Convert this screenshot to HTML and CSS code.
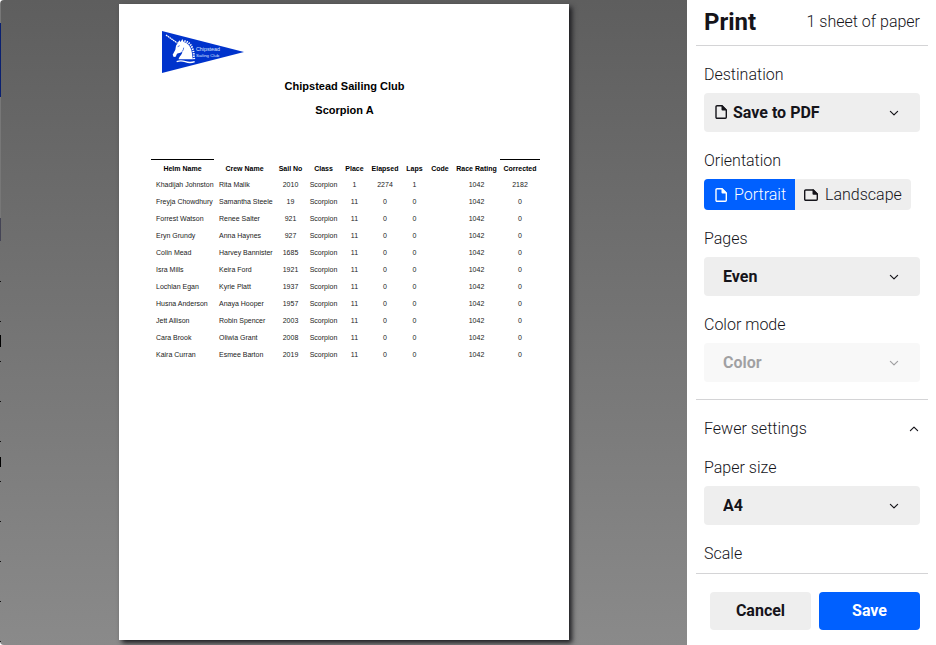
FILE: index.html
```html
<!DOCTYPE html>
<html lang="en">
<head>
<meta charset="utf-8">
<meta name="viewport" content="width=device-width, initial-scale=1">
<title>Print</title>
<link rel="stylesheet" href="styles.css">
</head>
<body>
<svg class="defs" aria-hidden="true">
  <symbol id="chevron" viewBox="0 0 12 12"><path d="M2.4 4.4l3.6 3.5 3.6-3.5" fill="none" stroke="currentColor" stroke-width="1.2" stroke-linecap="round" stroke-linejoin="round"/></symbol>
  <symbol id="portrait" viewBox="0 0 14 16"><path d="M3 1.7h5L12.3 6v7.3a1 1 0 0 1-1 1H3a1 1 0 0 1-1-1V2.7a1 1 0 0 1 1-1z" fill="none" stroke="currentColor" stroke-width="1.4"/><path d="M7.5 1.5h1L12.5 5.5v1h-4a1 1 0 0 1-1-1z" fill="currentColor"/></symbol>
  <symbol id="landscape" viewBox="0 0 16 14"><path d="M2.7 2h7.6l4 4v5.3a1 1 0 0 1-1 1H2.7a1 1 0 0 1-1-1V3a1 1 0 0 1 1-1z" fill="none" stroke="currentColor" stroke-width="1.4"/><path d="M9.5 1.5h1L14.8 5.8v1h-4.3a1 1 0 0 1-1-1z" fill="currentColor"/></symbol>
</svg>
<div class="dialog">
  <main class="preview">
    <article class="sheet">
      <svg class="logo" viewBox="0 0 246 126" role="img" aria-label="Chipstead Sailing Club pennant">
        <path d="M0 0L246 63L0 126z" fill="#0033cc"/>
        <path d="M12 12L46 36" stroke="#fff" stroke-width="4" stroke-dasharray="5 1.5"/>
        <path d="M47 36l5-8 4 5 5-9 4 9c12 3 20 12 23 24 3 12 2 20 5 28H50c1-9 10-13 11-23-6 4-11 3-16 6l-4 9-6 1-3-7 8-15 2-12z" fill="#fff"/>
        <path d="M67 30c14 3 22 13 26 27 3 10 2 20 4 29" fill="none" stroke="#fff" stroke-width="6" stroke-dasharray="4 3"/>
        <path d="M47 47l6-3M60 62q5-5 5-12" fill="none" stroke="#0033cc" stroke-width="2"/>
        <path d="M44 92q12-5 26 0t28 0" fill="none" stroke="#fff" stroke-width="4"/>
        <text class="logo-text" x="102" y="61">Chipstead</text>
        <text class="logo-text logo-subtext" x="102" y="78">Sailing Club</text>
      </svg>
      <h1>Chipstead Sailing Club</h1>
      <h2>Scorpion A</h2>
      <table>
        <colgroup><col class="c-helm"><col class="c-crew"><col class="c-sail"><col class="c-class"><col class="c-place"><col class="c-elapsed"><col class="c-laps"><col class="c-code"><col class="c-rating"><col class="c-corrected"></colgroup>
        <thead><tr><th>Helm Name</th><th>Crew Name</th><th>Sail No</th><th>Class</th><th>Place</th><th>Elapsed</th><th>Laps</th><th>Code</th><th>Race Rating</th><th>Corrected</th></tr></thead>
        <tbody>
          <tr><td>Khadijah Johnston</td><td>Rita Malik</td><td>2010</td><td>Scorpion</td><td>1</td><td>2274</td><td>1</td><td></td><td>1042</td><td>2182</td></tr>
          <tr><td>Freyja Chowdhury</td><td>Samantha Steele</td><td>19</td><td>Scorpion</td><td>11</td><td>0</td><td>0</td><td></td><td>1042</td><td>0</td></tr>
          <tr><td>Forrest Watson</td><td>Renee Salter</td><td>921</td><td>Scorpion</td><td>11</td><td>0</td><td>0</td><td></td><td>1042</td><td>0</td></tr>
          <tr><td>Eryn Grundy</td><td>Anna Haynes</td><td>927</td><td>Scorpion</td><td>11</td><td>0</td><td>0</td><td></td><td>1042</td><td>0</td></tr>
          <tr><td>Colin Mead</td><td>Harvey Bannister</td><td>1685</td><td>Scorpion</td><td>11</td><td>0</td><td>0</td><td></td><td>1042</td><td>0</td></tr>
          <tr><td>Isra Mills</td><td>Keira Ford</td><td>1921</td><td>Scorpion</td><td>11</td><td>0</td><td>0</td><td></td><td>1042</td><td>0</td></tr>
          <tr><td>Lochlan Egan</td><td>Kyrie Platt</td><td>1937</td><td>Scorpion</td><td>11</td><td>0</td><td>0</td><td></td><td>1042</td><td>0</td></tr>
          <tr><td>Husna Anderson</td><td>Anaya Hooper</td><td>1957</td><td>Scorpion</td><td>11</td><td>0</td><td>0</td><td></td><td>1042</td><td>0</td></tr>
          <tr><td>Jett Allison</td><td>Robin Spencer</td><td>2003</td><td>Scorpion</td><td>11</td><td>0</td><td>0</td><td></td><td>1042</td><td>0</td></tr>
          <tr><td>Cara Brook</td><td>Oliwia Grant</td><td>2008</td><td>Scorpion</td><td>11</td><td>0</td><td>0</td><td></td><td>1042</td><td>0</td></tr>
          <tr><td>Kaira Curran</td><td>Esmee Barton</td><td>2019</td><td>Scorpion</td><td>11</td><td>0</td><td>0</td><td></td><td>1042</td><td>0</td></tr>
        </tbody>
      </table>
    </article>
  </main>
  <form class="panel">
    <header class="panel-header">
      <h2 class="title">Print</h2>
      <span>1 sheet of paper</span>
    </header>
    <div class="settings">
      <div class="field">
        <label for="destination">Destination</label>
        <div class="select has-icon">
          <select id="destination"><option>Save to PDF</option></select>
          <svg class="doc"><use href="#portrait"/></svg>
          <svg class="chevron"><use href="#chevron"/></svg>
        </div>
      </div>
      <fieldset class="field">
        <legend>Orientation</legend>
        <div class="segments">
          <label class="segment"><input type="radio" name="orientation" checked><svg class="portrait"><use href="#portrait"/></svg>Portrait</label>
          <label class="segment"><input type="radio" name="orientation"><svg class="landscape"><use href="#landscape"/></svg>Landscape</label>
        </div>
      </fieldset>
      <div class="field">
        <label for="pages">Pages</label>
        <div class="select">
          <select id="pages"><option>Even</option></select>
          <svg class="chevron"><use href="#chevron"/></svg>
        </div>
      </div>
      <div class="field">
        <label for="color">Color mode</label>
        <div class="select disabled">
          <select id="color" disabled><option>Color</option></select>
          <svg class="chevron"><use href="#chevron"/></svg>
        </div>
      </div>
      <button class="more" type="button">Fewer settings<svg class="chevron-up"><use href="#chevron"/></svg></button>
      <div class="field">
        <label for="paper">Paper size</label>
        <div class="select">
          <select id="paper"><option>A4</option></select>
          <svg class="chevron"><use href="#chevron"/></svg>
        </div>
      </div>
      <fieldset class="field"><legend>Scale</legend></fieldset>
    </div>
    <footer class="actions">
      <button class="button" type="button">Cancel</button>
      <button class="button primary" type="submit">Save</button>
    </footer>
  </form>
</div>
</body>
</html>
```
FILE: styles.css
```css
* { box-sizing: border-box; }

body {
  margin: 0;
  background: #fff;
  color: #15141a;
  font: 300 16px/22px Roboto, sans-serif;
}

.defs { display: none; }

.dialog {
  display: flex;
  height: 100vh;
}

/* Preview */
.preview {
  flex: 1;
  min-width: 0;
  display: flex;
  justify-content: center;
  padding: 4px 0 5px 1px;
  overflow: hidden;
  border-radius: 4px 0 0 4px;
  background:
    linear-gradient(#777 23px, #0a2070 23px 97px, #777 97px 218px, #445 218px 241px, transparent 241px) 0 0 / 1px 241px no-repeat,
    repeating-linear-gradient(transparent 0 39px, #111 39px 40px) 0 242px / 1px 100% no-repeat,
    linear-gradient(#000, #000) 0 335px / 1px 12px no-repeat,
    linear-gradient(#000, #000) 0 457px / 1px 10px no-repeat,
    linear-gradient(#5e5e5e, #8a8a8a);
}

.sheet {
  height: 100%;
  aspect-ratio: 210 / 297;
  padding: 27px 29px 27px 32px;
  background: #fff;
  color: #000;
  box-shadow: 3px 3px 5px #1c1c20;
  font: 400 7px/9px "Liberation Sans", sans-serif;
}

.logo {
  display: block;
  width: 82px;
  height: 42px;
  margin-left: 11px;
}

.logo-text {
  fill: #dfe6ff;
  font: 16px "Liberation Sans", sans-serif;
}

.logo-subtext { font-size: 13px; }

.sheet h1,
.sheet h2 {
  margin: 0;
  padding-right: 2px;
  font-size: 11px;
  line-height: 24px;
  text-align: center;
}

.sheet h1 { margin-top: 1px; }

table {
  width: 100%;
  margin-top: 37px;
  border-collapse: separate;
  border-spacing: 0;
  table-layout: fixed;
  white-space: nowrap;
}

.c-helm { width: 63px; }
.c-crew { width: 61px; }
.c-sail { width: 31px; }
.c-class { width: 35px; }
.c-place { width: 27px; }
.c-elapsed { width: 34px; }
.c-laps { width: 25px; }
.c-code { width: 26px; }
.c-rating { width: 47px; }
.c-corrected { width: 40px; }

th, td {
  height: 17px;
  padding: 0;
  text-align: center;
}

td { color: #222; }

th { border-top: 1px solid transparent; }
th:first-child, th:last-child { border-top-color: #000; }

td:nth-child(-n+2) {
  padding-left: 5px;
  text-align: left;
}

/* Settings panel */
.panel {
  display: flex;
  flex-direction: column;
  width: 249px;
  padding: 0 8px 0 9px;
}

.panel-header {
  display: flex;
  justify-content: space-between;
  align-items: center;
  height: 46px;
  padding: 0 8px 2px;
  border-bottom: 1px solid #d4d4d6;
}

.title {
  margin: 0;
  font-size: 24px;
  line-height: 28px;
  font-weight: 700;
}

.settings {
  flex: 1;
  min-height: 0;
  padding-top: 18px;
  overflow: hidden;
}

.field {
  min-width: 0;
  margin: 0 8px 18px;
  padding: 0;
  border: 0;
}

.field > label,
legend {
  display: block;
  margin-bottom: 7px;
  padding: 0;
}

.select { position: relative; }

select {
  display: block;
  width: 100%;
  height: 39px;
  padding: 0 19px;
  appearance: none;
  border: 0;
  border-radius: 4px;
  background: #eeeeee;
  color: #15141a;
  font: 700 16px/22px Roboto, sans-serif;
  opacity: 1;
}

.has-icon select { padding-left: 29px; }
.disabled { opacity: 0.4; }

.chevron {
  position: absolute;
  top: 14px;
  right: 20px;
  width: 12px;
  height: 12px;
  pointer-events: none;
}

.doc {
  position: absolute;
  top: 11px;
  left: 10px;
  width: 14px;
  height: 16px;
}

.segments {
  display: inline-flex;
  vertical-align: top;
  overflow: hidden;
  border-radius: 4px;
  background: #eeeeee;
}

.segment {
  position: relative;
  display: flex;
  align-items: center;
  gap: 6px;
  height: 31px;
  padding: 1px 9px 0;
}

.segment:first-child { padding-left: 10px; }
.segment:last-child { padding-left: 8px; }

.segment:has(:checked) {
  background: #0060ff;
  color: #fff;
}

.segment input {
  position: absolute;
  inset: 0;
  margin: 0;
  opacity: 0;
}

.portrait { width: 14px; height: 16px; }
.landscape { width: 16px; height: 14px; }

button {
  border: 0;
  color: inherit;
  font: inherit;
}

.more {
  display: flex;
  justify-content: space-between;
  align-items: center;
  width: 100%;
  height: 58px;
  margin-top: -1px;
  padding: 0 8px;
  border-top: 1px solid #d4d4d6;
  background: none;
}

.chevron-up {
  width: 12px;
  height: 12px;
  transform: rotate(180deg);
}

.actions {
  display: flex;
  gap: 8px;
  padding: 18px 8px 15px 14px;
  border-top: 1px solid #d4d4d6;
}

.button {
  flex: 1;
  height: 38px;
  border-radius: 4px;
  background: #eeeeee;
  font-weight: 700;
}

.primary {
  background: #0060ff;
  color: #fff;
}
```
